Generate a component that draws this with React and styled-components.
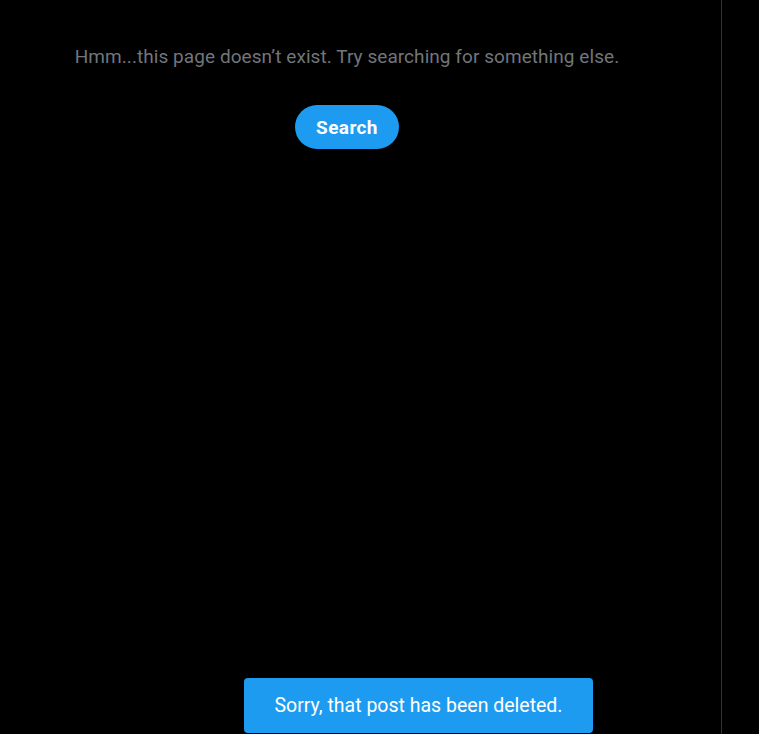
import styled, { createGlobalStyle } from 'styled-components'

const GlobalStyle = createGlobalStyle`
  html, body {
    margin: 0;
    padding: 0;
    background: #000;
  }
  body {
    font-family: Roboto, "Noto Sans", "Liberation Sans", sans-serif;
  }
`

const Page = styled.div`
  position: relative;
  width: 759px;
  height: 734px;
  overflow: hidden;
  background: #000;
`

const Column = styled.main`
  box-sizing: border-box;
  width: 722px;
  height: 100%;
  padding: 43px 27px 0 0;
  border-right: 1px solid #2f3336;
  display: flex;
  flex-direction: column;
  align-items: center;
`

const Message = styled.p`
  margin: 0;
  color: #71767b;
  font-size: 19px;
  letter-spacing: 0.06px;
  line-height: 27px;
  white-space: nowrap;
`

const SearchButton = styled.button`
  margin-top: 35px;
  height: 44px;
  padding: 0 21px;
  border: none;
  border-radius: 22px;
  background: #1d9bf0;
  color: #fff;
  font-family: inherit;
  font-size: 19px;
  font-weight: 700;
  letter-spacing: 0.4px;
  cursor: pointer;
`

const Toast = styled.div`
  position: absolute;
  left: 244px;
  bottom: 1px;
  width: 349px;
  height: 55px;
  border-radius: 4px;
  background: #1d9bf0;
  color: #fff;
  font-size: 19.5px;
  display: flex;
  align-items: center;
  justify-content: center;
`

export default function App() {
  return (
    <Page>
      <GlobalStyle />
      <Column>
        <Message>Hmm...this page doesn’t exist. Try searching for something else.</Message>
        <SearchButton>Search</SearchButton>
      </Column>
      <Toast role="alert">Sorry, that post has been deleted.</Toast>
    </Page>
  )
}
